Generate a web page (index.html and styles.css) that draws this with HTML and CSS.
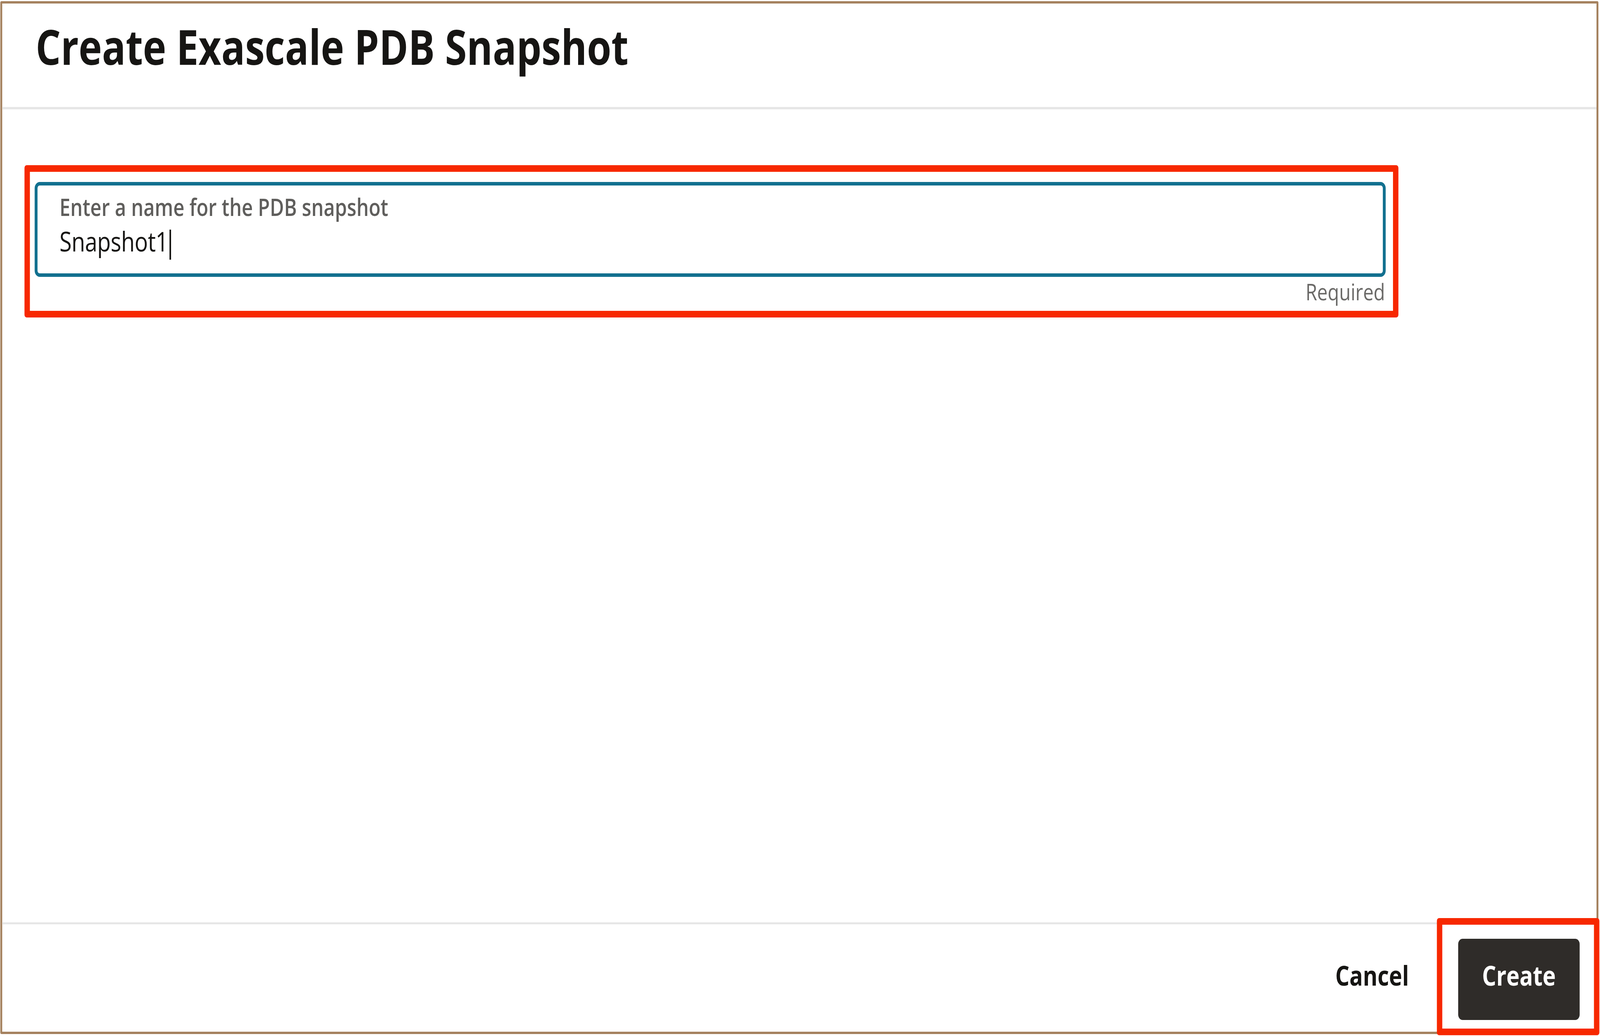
FILE: index.html
```html
<!DOCTYPE html>
<html lang="en">
<head>
<meta charset="utf-8">
<title>Create Exascale PDB Snapshot</title>
<link rel="stylesheet" href="styles.css">
</head>
<body>
<div class="viewport">
  <div class="stage" id="stage">
    <div class="frame">
      <header class="dlg-header">
        <h1 class="dlg-title">Create Exascale PDB Snapshot</h1>
      </header>
      <main class="dlg-body">
        <div class="annot annot-field">
          <div class="field">
            <label class="field-label" for="snap">Enter a name for the PDB snapshot</label>
            <div class="field-value" id="snap">Snapshot1<span class="caret"></span></div>
          </div>
          <div class="field-hint">Required</div>
        </div>
      </main>
      <footer class="dlg-footer">
        <button class="btn btn-text" type="button">Cancel</button>
        <div class="btn-wrap">
          <button class="btn btn-primary" type="button">Create</button>
          <span class="annot annot-btn"></span>
        </div>
      </footer>
    </div>
  </div>
</div>
<script src="script.js"></script>
</body>
</html>
```

FILE: styles.css
```css
* { box-sizing: border-box; }
html, body {
  margin: 0;
  padding: 0;
  background: #ffffff;
  overflow: hidden;
}
body {
  font-family: "Open Sans", "Noto Sans", "Liberation Sans", sans-serif;
  color: #161513;
}
.viewport {
  width: 100vw;
  height: 100vh;
  overflow: hidden;
}
/* the dialog is designed on a 5032 x 2653 canvas and fitted to the window */
.stage {
  width: 5032px;
  height: 2653px;
  transform-origin: 0 0;
}
.frame {
  margin: 3px 5px 5px 1px;
  height: 2645px;
  border: 6px solid #a5825f;
  border-radius: 4px;
  display: flex;
  flex-direction: column;
  background: #ffffff;
}
.dlg-header {
  height: 271px;
  flex: none;
  padding: 34px 0 0 105px;
  border-bottom: 6px solid #e6e6e6;
}
.dlg-title {
  margin: 0;
  font-size: 124px;
  line-height: 150px;
  font-weight: 700;
  color: #161513;
}
.dlg-body {
  flex: 1;
  padding: 143px 0 0 70px;
}
.annot {
  border: 17px solid #f72800;
  border-radius: 7px;
}
.annot-field {
  width: 4321px;
  padding: 26px 23px 15px 15px;
}
.field {
  height: 243px;
  border: 9px solid #12708f;
  border-radius: 16px;
  padding: 19px 0 0 69px;
}
.field-label {
  display: block;
  font-size: 61px;
  line-height: 72px;
  font-weight: 600;
  color: #5f5e5c;
}
.field-value {
  margin-top: 9px;
  font-size: 70px;
  line-height: 84px;
  letter-spacing: -0.5px;
  color: #161513;
}
.caret {
  display: inline-block;
  width: 5px;
  height: 77px;
  margin-left: 4px;
  vertical-align: -21px;
  background: #161513;
}
.field-hint {
  padding: 2px 2px 0 0;
  text-align: right;
  font-size: 59px;
  line-height: 70px;
  color: #6b6a68;
}
.dlg-footer {
  height: 280px;
  flex: none;
  border-top: 5px solid #e6e6e6;
  padding: 7px 53px 0 0;
  display: flex;
  justify-content: flex-end;
  align-items: center;
  gap: 79px;
}
.btn {
  font-family: inherit;
  font-size: 70px;
  font-weight: 700;
  height: 208px;
  padding: 0 76px 22px;
  border: none;
  border-radius: 14px;
  margin: 0;
  cursor: pointer;
}
.btn-text {
  background: transparent;
  color: #161513;
}
.btn-wrap {
  position: relative;
}
.btn-primary {
  display: block;
  width: 382px;
  padding: 0 0 22px 0;
  background: #2f2c29;
  color: #ffffff;
}
.annot-btn {
  position: absolute;
  top: -53px;
  left: -67px;
  right: -62px;
  bottom: -39px;
  pointer-events: none;
}
```

FILE: script.js
```js
(function () {
  var stage = document.getElementById('stage');
  function fit() {
    var sx = window.innerWidth / 5032;
    var sy = window.innerHeight / 2653;
    stage.style.transform = 'scale(' + sx + ',' + sy + ')';
  }
  fit();
  window.addEventListener('resize', fit);
})();
```
